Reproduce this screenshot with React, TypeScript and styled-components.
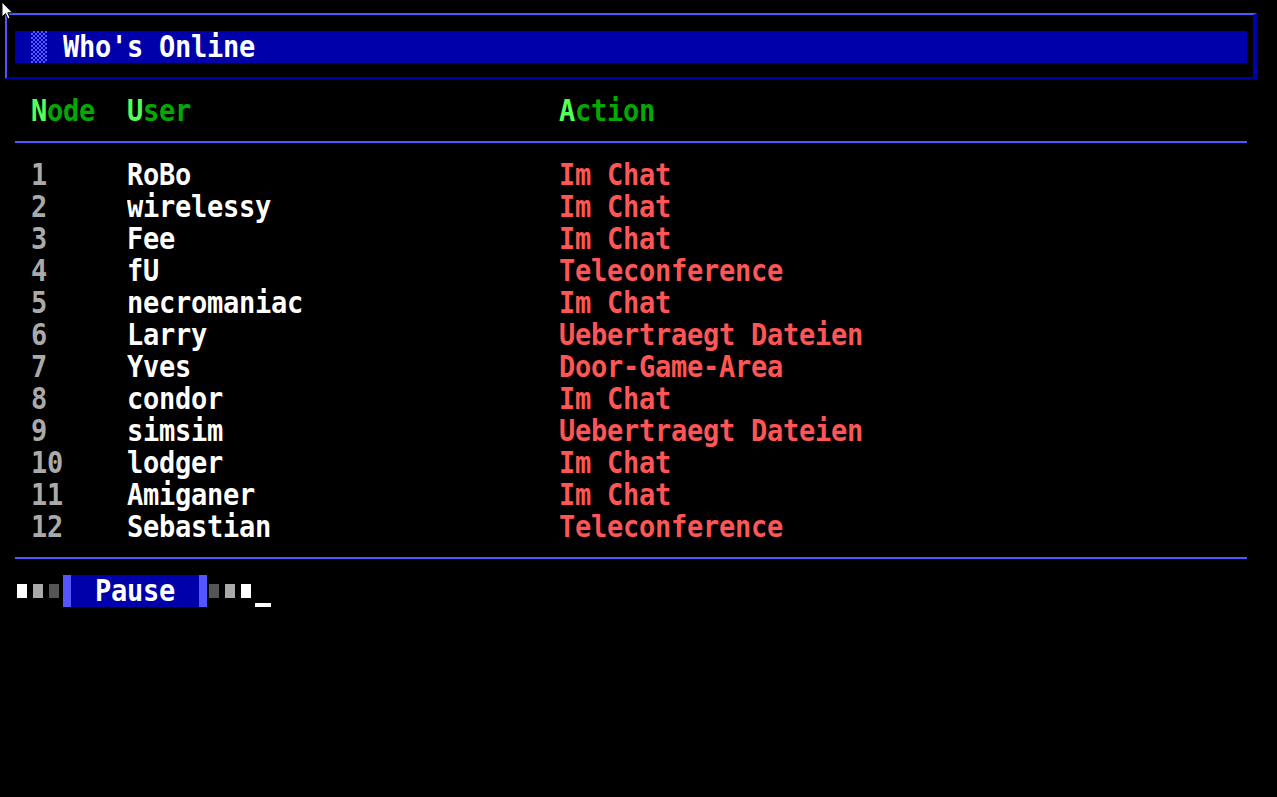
import React from "react";
import styled, { createGlobalStyle } from "styled-components";

const GlobalStyle = createGlobalStyle`
  html, body {
    margin: 0;
    padding: 0;
    background: #000;
  }
`;

const Screen = styled.div`
  position: relative;
  width: 1277px;
  height: 797px;
  overflow: hidden;
  background: #000;
  display: flex;
  flex-direction: column;
  font-family: "DejaVu Sans Mono", "Liberation Mono", monospace;
  font-weight: bold;
  font-size: 27px;
  letter-spacing: -0.25px;
  line-height: 32px;
`;

const TitleFrame = styled.div`
  box-sizing: border-box;
  margin: 13px 0 0 5px;
  width: 1252px;
  height: 66px;
  border-top: 2px solid #5555ff;
  border-left: 2px solid #5555ff;
  border-bottom: 2px solid #0000aa;
  border-right: 4px solid #0000aa;
  padding: 16px 0 0 8px;
`;

const TitleBar = styled.div`
  display: flex;
  align-items: center;
  width: 1232px;
  height: 32px;
  background: #0000aa;
  color: #ffffff;
`;

const Stipple = styled.span`
  display: block;
  margin-left: 16px;
  width: 16px;
  height: 32px;
  background: repeating-conic-gradient(#5555ff 0 25%, #0000aa 0 50%) 0 0 / 4px 4px;
`;

const Glyphs = styled.span<{ $color?: string }>`
  display: inline-block;
  white-space: pre;
  color: ${(p) => p.$color ?? "#ffffff"};
  transform: scaleY(1.12);
  transform-origin: 50% 60%;
`;

const TitleText = styled(Glyphs)`
  margin-left: 16px;
`;

const Row = styled.div<{ $top?: number }>`
  display: grid;
  grid-template-columns: 96px 432px 1fr;
  height: 32px;
  padding-left: 31px;
  margin-top: ${(p) => p.$top ?? 0}px;
`;

const Rule = styled.div<{ $top: number; $bottom: number }>`
  width: 1232px;
  height: 2px;
  margin: ${(p) => p.$top}px 0 ${(p) => p.$bottom}px 15px;
  background: #5555ff;
`;

const Heading = ({ text }: { text: string }) => (
  <Glyphs $color="#00aa00">
    <span style={{ color: "#55ff55" }}>{text[0]}</span>
    {text.slice(1)}
  </Glyphs>
);

const PauseRow = styled.div`
  display: flex;
  align-items: center;
  height: 32px;
  padding-left: 15px;
`;

const Dot = styled.span<{ $color: string }>`
  display: block;
  width: 10px;
  height: 14px;
  margin: 0 4px 0 2px;
  background: ${(p) => p.$color};
`;

const PauseButton = styled.div`
  box-sizing: border-box;
  width: 144px;
  height: 32px;
  padding-left: 24px;
  background: #0000aa;
  border-left: 8px solid #5555ff;
  border-right: 8px solid #5555ff;
`;

const Cursor = styled.span`
  display: block;
  align-self: flex-end;
  width: 16px;
  height: 4px;
  background: #ffffff;
`;

const MousePointer = styled.svg`
  position: absolute;
  left: 1px;
  top: 1px;
`;

const users: [string, string, string][] = [
  ["1", "RoBo", "Im Chat"],
  ["2", "wirelessy", "Im Chat"],
  ["3", "Fee", "Im Chat"],
  ["4", "fU", "Teleconference"],
  ["5", "necromaniac", "Im Chat"],
  ["6", "Larry", "Uebertraegt Dateien"],
  ["7", "Yves", "Door-Game-Area"],
  ["8", "condor", "Im Chat"],
  ["9", "simsim", "Uebertraegt Dateien"],
  ["10", "lodger", "Im Chat"],
  ["11", "Amiganer", "Im Chat"],
  ["12", "Sebastian", "Teleconference"],
];

export default function App() {
  return (
    <Screen>
      <GlobalStyle />
      <TitleFrame>
        <TitleBar>
          <Stipple />
          <TitleText>Who's Online</TitleText>
        </TitleBar>
      </TitleFrame>

      <Row $top={16}>
        <Heading text="Node" />
        <Heading text="User" />
        <Heading text="Action" />
      </Row>

      <Rule $top={14} $bottom={16} />

      {users.map(([node, user, action]) => (
        <Row key={node}>
          <Glyphs $color="#aaaaaa">{node}</Glyphs>
          <Glyphs $color="#ffffff">{user}</Glyphs>
          <Glyphs $color="#ff5555">{action}</Glyphs>
        </Row>
      ))}

      <Rule $top={14} $bottom={16} />

      <PauseRow>
        <Dot $color="#ffffff" />
        <Dot $color="#aaaaaa" />
        <Dot $color="#555555" />
        <PauseButton>
          <Glyphs $color="#ffffff">Pause</Glyphs>
        </PauseButton>
        <Dot $color="#555555" />
        <Dot $color="#aaaaaa" />
        <Dot $color="#ffffff" />
        <Cursor />
      </PauseRow>

      <MousePointer width="14" height="20" viewBox="0 0 14 20">
        <path
          d="M1 1 L1 16 L4.5 12.5 L7 18 L9 17 L6.8 11.8 L11.5 11.8 Z"
          fill="#ffffff"
          stroke="#000000"
          strokeWidth="1"
          strokeLinejoin="miter"
        />
      </MousePointer>
    </Screen>
  );
}
